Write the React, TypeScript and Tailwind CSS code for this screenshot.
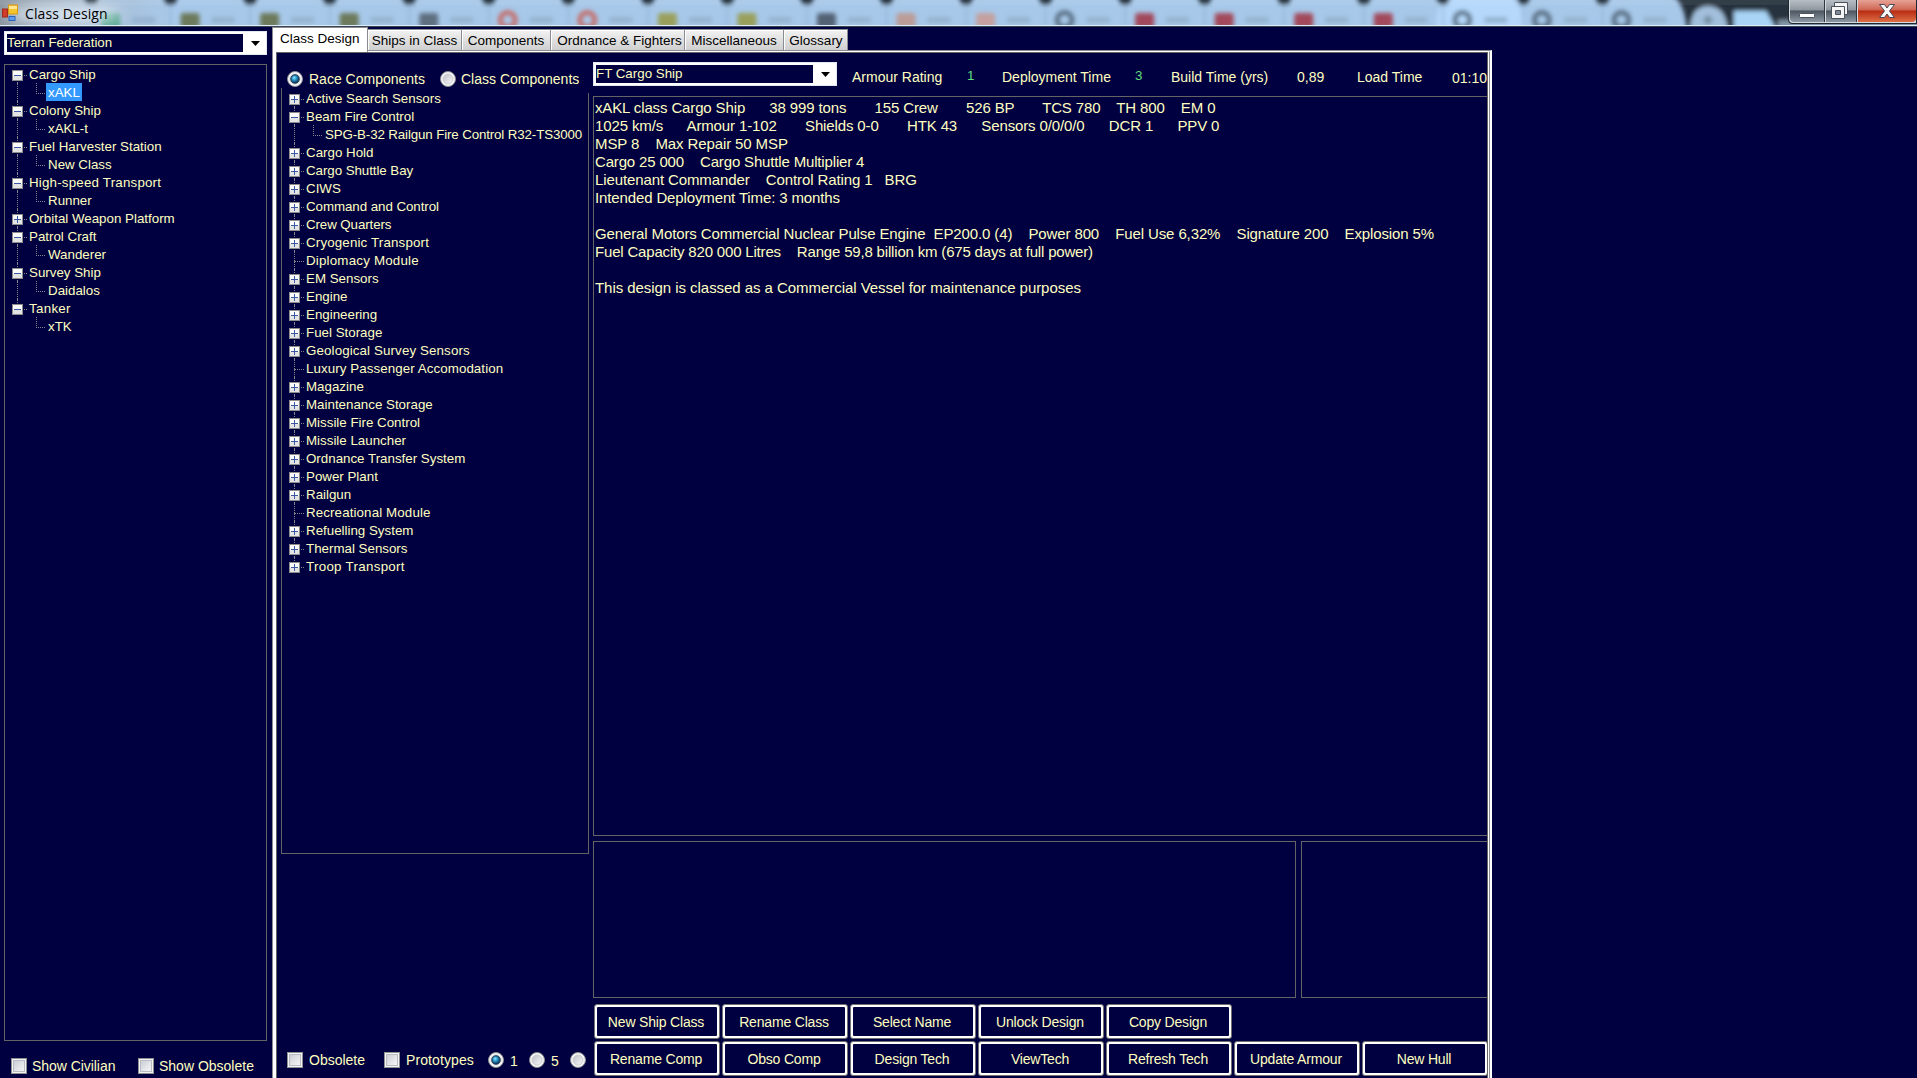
import { clsx } from "clsx";

type Node = { label: string; state: "open" | "closed" | "leaf"; children?: string[]; track?: string };

const classes: Node[] = [
  { label: "Cargo Ship", state: "open", children: ["xAKL"] },
  { label: "Colony Ship", state: "open", children: ["xAKL-t"] },
  { label: "Fuel Harvester Station", state: "open", children: ["New Class"] },
  {
    label: "High-speed Transport",
    state: "open",
    children: ["Runner"],
    track: "tracking-[0.2px]",
  },
  { label: "Orbital Weapon Platform", state: "closed" },
  { label: "Patrol Craft", state: "open", children: ["Wanderer"] },
  { label: "Survey Ship", state: "open", children: ["Daidalos"] },
  { label: "Tanker", state: "open", children: ["xTK"], track: "tracking-[0.3px]" },
];

const components: Node[] = [
  { label: "Active Search Sensors", state: "closed" },
  {
    label: "Beam Fire Control",
    state: "open",
    children: ["SPG-B-32 Railgun Fire Control R32-TS3000"],
  },
  { label: "Cargo Hold", state: "closed" },
  { label: "Cargo Shuttle Bay", state: "closed", track: "tracking-[-0.06px]" },
  { label: "CIWS", state: "closed" },
  { label: "Command and Control", state: "closed", track: "tracking-[-0.06px]" },
  { label: "Crew Quarters", state: "closed", track: "tracking-[-0.1px]" },
  { label: "Cryogenic Transport", state: "closed", track: "tracking-[0.16px]" },
  { label: "Diplomacy Module", state: "leaf", track: "tracking-[0.2px]" },
  { label: "EM Sensors", state: "closed" },
  { label: "Engine", state: "closed" },
  { label: "Engineering", state: "closed" },
  { label: "Fuel Storage", state: "closed" },
  { label: "Geological Survey Sensors", state: "closed", track: "tracking-[0.12px]" },
  { label: "Luxury Passenger Accomodation", state: "leaf", track: "tracking-[0.08px]" },
  { label: "Magazine", state: "closed" },
  { label: "Maintenance Storage", state: "closed" },
  { label: "Missile Fire Control", state: "closed" },
  { label: "Missile Launcher", state: "closed" },
  { label: "Ordnance Transfer System", state: "closed" },
  { label: "Power Plant", state: "closed" },
  { label: "Railgun", state: "closed" },
  { label: "Recreational Module", state: "leaf", track: "tracking-[0.12px]" },
  { label: "Refuelling System", state: "closed" },
  { label: "Thermal Sensors", state: "closed" },
  { label: "Troop Transport", state: "closed", track: "tracking-[0.3px]" },
];

const summary = [
  {
    text: "xAKL class Cargo Ship      38 999 tons       155 Crew       526 BP       TCS 780    TH 800    EM 0",
    track: "tracking-[-0.13px]",
  },
  {
    text: "1025 km/s      Armour 1-102       Shields 0-0       HTK 43      Sensors 0/0/0/0      DCR 1      PPV 0",
    track: "tracking-[-0.125px]",
  },
  { text: "MSP 8    Max Repair 50 MSP", track: "tracking-[-0.11px]" },
  { text: "Cargo 25 000    Cargo Shuttle Multiplier 4", track: "tracking-[-0.16px]" },
  { text: "Lieutenant Commander    Control Rating 1   BRG", track: "tracking-[-0.11px]" },
  { text: "Intended Deployment Time: 3 months", track: "tracking-[-0.13px]" },
  { text: "", track: "" },
  {
    text: "General Motors Commercial Nuclear Pulse Engine  EP200.0 (4)    Power 800    Fuel Use 6,32%    Signature 200    Explosion 5%",
    track: "tracking-[-0.12px]",
  },
  {
    text: "Fuel Capacity 820 000 Litres    Range 59,8 billion km (675 days at full power)",
    track: "tracking-[-0.18px]",
  },
  { text: "", track: "" },
  {
    text: "This design is classed as a Commercial Vessel for maintenance purposes",
    track: "tracking-[-0.05px]",
  },
];

const tabs = [
  { label: "Ships in Class", width: "w-[94px]" },
  { label: "Components", width: "w-[89px]" },
  { label: "Ordnance & Fighters", width: "w-[134px] pl-1" },
  { label: "Miscellaneous", width: "w-[99px]" },
  { label: "Glossary", width: "w-[64px] pl-px" },
];

const stats = [
  { label: "Armour Rating", width: "w-[115px]" },
  { label: "1", width: "w-[35px]", green: true },
  { label: "Deployment Time", width: "w-[133px]" },
  { label: "3", width: "w-[36px]", green: true },
  { label: "Build Time (yrs)", width: "w-[126px]" },
  { label: "0,89", width: "w-[60px]" },
  { label: "Load Time", width: "w-[95px]" },
  { label: "01:10", width: "w-[36px] pt-px" },
];

const topButtons = ["New Ship Class", "Rename Class", "Select Name", "Unlock Design", "Copy Design"];
const bottomButtons = [
  "Rename Comp",
  "Obso Comp",
  "Design Tech",
  "ViewTech",
  "Refresh Tech",
  "Update Armour",
  "New Hull",
];

const Expander = ({ open }: { open: boolean }) => (
  <svg width="11" height="11" className="relative shrink-0" shapeRendering="crispEdges">
    <rect width="11" height="11" fill="#8c8c8c" />
    <rect x="1" y="1" width="9" height="9" fill="#fbfbfb" />
    <rect x="1" y="6" width="9" height="4" fill="#e4e4e4" />
    <rect x="2" y="5" width="7" height="1" fill="#3c59a6" />
    {!open && <rect x="5" y="2" width="1" height="7" fill="#3c59a6" />}
  </svg>
);

const Tree = ({ nodes, selected }: { nodes: Node[]; selected?: string }) => (
  <div className="text-[13.33px] leading-[20px] whitespace-nowrap">
    {nodes.map((node, i) => {
      const last = i === nodes.length - 1;
      return (
        <div key={node.label}>
          <div className="relative flex h-[18px] pl-[7px]">
            <div
              className={clsx(
                "absolute left-3 border-l border-dotted border-[#85858f]",
                i === 0 ? "top-2.5" : "top-0",
                last ? "h-2.5" : "bottom-0",
              )}
            />
            <div className="absolute left-3 top-2.5 w-[10px] border-t border-dotted border-[#85858f]" />
            <div className="w-[17px] shrink-0 pt-[5px]">
              {node.state !== "leaf" && <Expander open={node.state === "open"} />}
            </div>
            <span className={node.track}>{node.label}</span>
          </div>
          {node.children?.map((child) => (
            <div key={child} className="relative flex h-[18px] pl-[41px]">
              {!last && (
                <div className="absolute inset-y-0 left-3 border-l border-dotted border-[#85858f]" />
              )}
              <div className="absolute left-[31px] top-0 h-[11px] w-[9px] border-b border-l border-dotted border-[#85858f]" />
              <span
                className={clsx(
                  "h-[18px] px-0.5",
                  child === selected && "bg-[#3399ff] text-white",
                  child.length > 30 && "tracking-[-0.13px]",
                )}
              >
                {child}
              </span>
            </div>
          ))}
        </div>
      );
    })}
  </div>
);

const Combo = ({ value, className }: { value: string; className: string }) => (
  <div
    className={clsx(
      "flex h-6 items-center border border-[#e3e9f0] bg-white p-0.5 text-[13.33px]",
      className,
    )}
  >
    <div className="h-[18px] flex-1 bg-[#000040] leading-[17px]">{value}</div>
    <svg width="21" height="18" className="shrink-0">
      <path d="M8 7h9l-4.5 5z" fill="#000" />
    </svg>
  </div>
);

const Radio = ({ checked }: { checked?: boolean }) => (
  <svg width="16" height="16" className="shrink-0">
    <defs>
      <radialGradient id="ball" cx="0.4" cy="0.35" r="0.65">
        <stop offset="0" stopColor="#8fe6ff" />
        <stop offset="0.45" stopColor="#2596c8" />
        <stop offset="1" stopColor="#0b2f50" />
      </radialGradient>
      <linearGradient id="dish" x1="0" y1="0" x2="1" y2="1">
        <stop offset="0" stopColor="#bcbfc6" />
        <stop offset="1" stopColor="#f8f8f8" />
      </linearGradient>
    </defs>
    <circle cx="8" cy="8" r="7.5" fill="#f6f6f6" stroke="#8a8c90" />
    <circle cx="8" cy="8" r="5" fill="url(#dish)" stroke="#c4c6ca" strokeWidth="0.8" />
    {checked && <circle cx="8" cy="8" r="4.2" fill="url(#ball)" stroke="#17324f" />}
  </svg>
);

const Check = () => (
  <div className="size-4 shrink-0 border border-[#8e8f8f] bg-[#f4f4f4] p-px">
    <div className="size-full border border-[#b9bcc2] bg-linear-to-br from-[#cbcfd5] to-[#f6f6f6]" />
  </div>
);

const Button = ({ label }: { label: string }) => (
  <button className="h-[35px] w-[126px] shrink-0 rounded-[3px] border border-[#707070] bg-white p-0.5 text-[14px] tracking-[-0.18px]">
    <span className="flex h-full items-center justify-center rounded-[1px] bg-[#000040] pt-px pr-0.5">
      {label}
    </span>
  </button>
);

// Browser tabs seen through the glass of the title bar
const favicons = [
  { color: "#4fa389", ring: false },
  { color: "#6d7a5c", ring: false },
  { color: "#6d7a5c", ring: false },
  { color: "#6d7a5c", ring: false },
  { color: "#5f7081", ring: false },
  { color: "#c4706d", ring: true },
  { color: "#c4706d", ring: true },
  { color: "#9aa05c", ring: false },
  { color: "#9aa05c", ring: false },
  { color: "#536274", ring: false },
  { color: "#bb9c97", ring: false },
  { color: "#c5a09f", ring: false },
  { color: "#5c7288", ring: true },
  { color: "#a3485c", ring: false },
  { color: "#a3485c", ring: false },
  { color: "#a3485c", ring: false },
  { color: "#a3485c", ring: false },
  { color: "#5c7288", ring: true },
  { color: "#5c7288", ring: true },
  { color: "#5c7288", ring: true },
];

const Glass = () => (
  <svg width="1917" height="26" className="absolute inset-0">
    <defs>
      <filter id="soft" x="-20%" y="-50%" width="140%" height="200%">
        <feGaussianBlur stdDeviation="2.3" />
      </filter>
      <filter id="glow" x="-30%" y="-100%" width="160%" height="300%">
        <feGaussianBlur stdDeviation="7" />
      </filter>
      <linearGradient id="edge" x1="0" x2="1">
        <stop offset="0" stopColor="#8a949e" />
        <stop offset="0.55" stopColor="#a6bdd4" />
        <stop offset="1" stopColor="#a9caec" />
      </linearGradient>
    </defs>
    <rect width="1917" height="26" fill="#a7c8e9" />
    <rect width="180" height="26" fill="url(#edge)" />
    <g filter="url(#soft)">
      <path d="M1448-4h62q12 4 16 36h-90q0-30 12-36z" fill="#b5d8fb" />
      <path d="M1672-5h250v36h-235q-2-28-15-36z" fill="#26313d" />
      <path d="M1690 32q0-26 18-26t20 26z" fill="#a2c0dc" />
      <path d="M1734 32V11h32l12 21z" fill="#a9d4f6" />
      <path d="M1778 20h145v9h-145z" fill="#8295a6" />
      {favicons.map((icon, i) => {
        const x = 91 + i * 79.55;
        return (
          <g key={i}>
            <path d={`M${x - 8}-4h16l-5 9h-6z`} fill="#101b28" />
            <path d={`M${x} 3v25`} stroke="#93b3d2" strokeWidth="1.5" />
            {icon.ring ? (
              <circle cx={x + 19} cy="20" r="7.5" fill="none" stroke={icon.color} strokeWidth="5" />
            ) : (
              <rect x={x + 10} y="13" width="19" height="15" rx="3" fill={icon.color} />
            )}
            <rect x={x + 41} y="17" width="23" height="6" fill="#95b3d0" />
          </g>
        );
      })}
      <path d="M1703 20h10M1708 15v10" stroke="#6d8498" strokeWidth="3" />
    </g>
    <ellipse cx="64" cy="14" rx="58" ry="10" fill="#e2edf8" opacity="0.85" filter="url(#glow)" />
    <rect width="1917" height="5" fill="#fff" opacity="0.06" />
  </svg>
);

const TitleBar = () => (
  <div className="relative flex h-[27px] shrink-0 overflow-hidden border-b border-[#3a4452] font-['Open_Sans',sans-serif]">
    <Glass />
    <div className="absolute inset-x-0 bottom-0 h-px bg-[#dcebf8]" />
    <svg width="18" height="18" className="relative mt-1 ml-0.5 shrink-0">
      <rect x="6.5" y="1" width="9" height="9" fill="#f6c52c" stroke="#d99a14" />
      <path d="M7 2h8v3H7z" fill="#ffe694" />
      <rect x="0.5" y="5" width="5" height="8" fill="#cf3c28" stroke="#a3271b" />
      <rect x="7" y="12.500" width="6" height="4" fill="#5d9cec" stroke="#2d63b8" />
    </svg>
    <span className="relative ml-[5px] text-[14px] leading-[27px] tracking-[0.1px] text-black">
      Class Design
    </span>
    <svg width="129" height="24" className="relative ml-auto shrink-0">
      <defs>
        <linearGradient id="btn" x1="0" y1="0" x2="0" y2="1">
          <stop offset="0" stopColor="#b7bec5" />
          <stop offset="0.45" stopColor="#8e979f" />
          <stop offset="0.5" stopColor="#4d565f" />
          <stop offset="1" stopColor="#8d99a5" />
        </linearGradient>
        <linearGradient id="close" x1="0" y1="0" x2="0" y2="1">
          <stop offset="0" stopColor="#e6a397" />
          <stop offset="0.45" stopColor="#cf6552" />
          <stop offset="0.5" stopColor="#b92c12" />
          <stop offset="1" stopColor="#dd6f46" />
        </linearGradient>
      </defs>
      <path d="M0 0h129v24H5q-5 0-5-5z" fill="#1f2730" />
      <path d="M1 0h127v23H5q-4 0-4-4z" fill="#d4dbe1" />
      <path d="M2 0h34v22H6q-4 0-4-4z" fill="url(#btn)" />
      <path d="M38 0h30v22H38z" fill="url(#btn)" />
      <path d="M70 0h58v18q0 4-4 4H70z" fill="url(#close)" />
      <path d="M36.500 0v22M68.500 0v22" stroke="#30363e" />
      <rect x="11.500" y="13.500" width="15" height="4" rx="1" fill="#fff" stroke="#4a5260" />
      <path d="M46.500 2.500h13v12h-3v4h-13v-12h3z" fill="#f5f5f5" stroke="#4a5260" />
      <path d="M43.500 6.500h13v12h-13z" fill="#f5f5f5" stroke="#4a5260" />
      <path d="M47.500 10.500h5v4h-5z" fill="#7f8995" stroke="#4a5260" />
      <path
        d="M91.500 4.500h5l2.500 3.500 2.500-3.500h5l-5 6.500 5 6.500h-5l-2.500-3.500-2.500 3.500h-5l5-6.500z"
        fill="#f7f7f7"
        stroke="#4b4455"
      />
    </svg>
  </div>
);

const Sidebar = () => (
  <div className="flex w-[272px] shrink-0 flex-col pt-1 pl-1">
    <Combo value="Terran Federation" className="w-[263px]" />
    <div className="mt-[9px] h-[977px] w-[263px] border border-[#646464]">
      <Tree nodes={classes} selected="xAKL" />
    </div>
    <div className="mt-[17px] flex h-4 items-center pl-[7px] text-[14px] leading-4">
      <Check />
      <span className="w-[111px] pl-[5px] tracking-[-0.05px]">Show Civilian</span>
      <Check />
      <span className="pl-[5px]">Show Obsolete</span>
    </div>
  </div>
);

const ComponentPane = () => (
  <div className="flex w-[312px] shrink-0 flex-col pl-1">
    <div className="mt-[17px] flex h-[18px] items-center pl-1.5 text-[14px] leading-[18px]">
      <Radio checked />
      <span className="w-[137px] pl-1.5">Race Components</span>
      <Radio />
      <span className="pl-[5px] whitespace-nowrap">Class Components</span>
    </div>
    <div className="relative h-[766px] w-[308px] border border-t-0 border-[#646464] pt-px">
      <div className="absolute -top-px right-[-1px] h-1.5 w-px bg-[#000040]" />
      <Tree nodes={components} />
    </div>
    <div className="mt-[198px] flex h-4 items-center pl-1.5 text-[14px] leading-4">
      <Check />
      <span className="w-[81px] pl-1.5">Obsolete</span>
      <Check />
      <span className="w-[88px] pl-1.5 tracking-[0.1px]">Prototypes</span>
      <Radio checked />
      <span className="w-[25px] pt-0.5 pl-1.5">1</span>
      <Radio />
      <span className="w-[25px] pt-0.5 pl-1.5">5</span>
      <Radio />
    </div>
  </div>
);

const DesignPane = () => (
  <div className="flex min-w-0 flex-1 flex-col pl-1">
    <div className="mt-[9px] flex">
      <Combo value="FT Cargo Ship" className="w-[244px] shrink-0" />
      <div className="flex pt-1.5 pl-[15px] text-[14px] leading-[18px] whitespace-nowrap">
        {stats.map((s) => (
          <span
            key={s.label}
            className={clsx(
              "shrink-0",
              s.width,
              s.green && "-mt-px text-[13.33px] text-[#5fdc7c]",
            )}
          >
            {s.label}
          </span>
        ))}
      </div>
    </div>
    <div className="mt-[9px] h-[740px] border border-r-0 border-[#646464] pt-0.5 pl-px text-[15px] leading-[18px]">
      {summary.map((line, i) => (
        <p key={i} className={clsx("h-[18px] whitespace-pre", line.track)}>
          {line.text}
        </p>
      ))}
    </div>
    <div className="mt-[5px] flex h-[157px] gap-[5px]">
      <div className="w-[703px] shrink-0 border border-[#646464]" />
      <div className="flex-1 border border-r-0 border-[#646464]" />
    </div>
    <div className="mt-1.5 ml-px flex gap-0.5">
      {topButtons.map((b) => (
        <Button key={b} label={b} />
      ))}
    </div>
    <div className="mt-0.5 ml-px flex gap-0.5">
      {bottomButtons.map((b) => (
        <Button key={b} label={b} />
      ))}
    </div>
  </div>
);

export default function App() {
  return (
    <div className="flex h-[1078px] w-[1917px] flex-col overflow-hidden bg-[#000040] font-['Liberation_Sans',Arial,sans-serif] text-[#ffffc0]">
      <TitleBar />
      <div className="flex min-h-0 flex-1">
        <Sidebar />
        <div className="flex w-[1220px] shrink-0 flex-col">
          <div className="flex h-[23px] items-end text-[13.5px] text-black">
            <div className="relative z-10 -mb-0.5 h-[25px] w-[96px] shrink-0 border border-b-0 border-[#8a8c92] bg-white pl-[7px] leading-[22px]">
              Class Design
            </div>
            {tabs.map((t) => (
              <div
                key={t.label}
                className={clsx(
                  "h-[21px] shrink-0 border-t border-r border-[#8a8c92] bg-linear-to-b from-[#f2f2f2] to-[#cfcfcf] text-center leading-[21px] whitespace-nowrap shadow-[inset_1px_1px_0_#fff]",
                  t.width,
                )}
              >
                {t.label}
              </div>
            ))}
          </div>
          <div className="min-h-0 flex-1 border-t border-r-2 border-l border-t-[#8a8c92] border-r-white border-l-[#8a8c92]">
            <div className="h-full border-t border-r border-l-[3px] border-t-white border-r-[#8a8c92] border-l-white">
              <div className="h-full border-r border-white">
                <div className="flex h-full overflow-hidden border-t border-r border-l border-[#646464]">
                  <ComponentPane />
                  <DesignPane />
                </div>
              </div>
            </div>
          </div>
        </div>
      </div>
    </div>
  );
}
